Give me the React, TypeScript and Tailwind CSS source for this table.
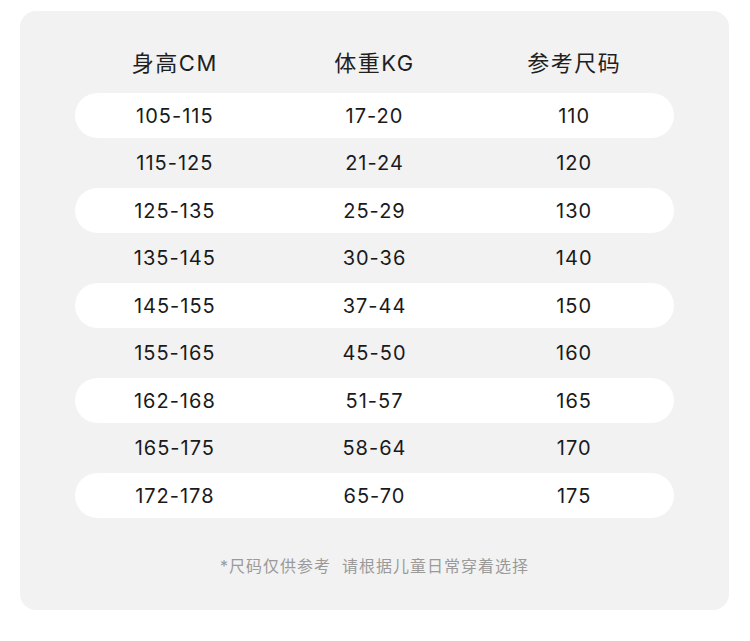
const rows = [
  ["105-115", "17-20", "110"],
  ["115-125", "21-24", "120"],
  ["125-135", "25-29", "130"],
  ["135-145", "30-36", "140"],
  ["145-155", "37-44", "150"],
  ["155-165", "45-50", "160"],
  ["162-168", "51-57", "165"],
  ["165-175", "58-64", "170"],
  ["172-178", "65-70", "175"],
];

const headers = ["身高CM", "体重KG", "参考尺码"];

export default function App() {
  return (
    <div
      className="h-[641px] w-[750px] bg-white pl-[20px] pt-[11px]"
      style={{ fontFamily: 'Inter, "Noto Sans CJK SC", sans-serif' }}
    >
      <div className="flex h-[599px] w-[709px] flex-col rounded-[16px] bg-[#f2f2f2] px-[55px] pt-[28px]">
        <div className="grid h-[48px] grid-cols-3 items-center text-[22px] tracking-[1.5px] text-[#1f1f1f]">
          {headers.map((h) => (
            <div key={h} className="text-center">
              {h}
            </div>
          ))}
        </div>
        <div className="mt-[5px] flex flex-col">
          {rows.map((r, i) => (
            <div key={r[0]} className="flex h-[47.5px] items-center">
              <div
                className={
                  "grid h-[45px] w-full grid-cols-3 items-center rounded-full text-[20px] tracking-[1px] text-[#1a1a1a] " +
                  (i % 2 === 0 ? "bg-white" : "")
                }
              >
                {r.map((c, j) => (
                  <div key={j} className="text-center">
                    {c}
                  </div>
                ))}
              </div>
            </div>
          ))}
        </div>
        <p className="mt-[36px] text-center text-[16px] leading-[20px] tracking-[1px] text-[#9a9a9a]">
          *尺码仅供参考&nbsp;&nbsp;请根据儿童日常穿着选择
        </p>
      </div>
    </div>
  );
}
